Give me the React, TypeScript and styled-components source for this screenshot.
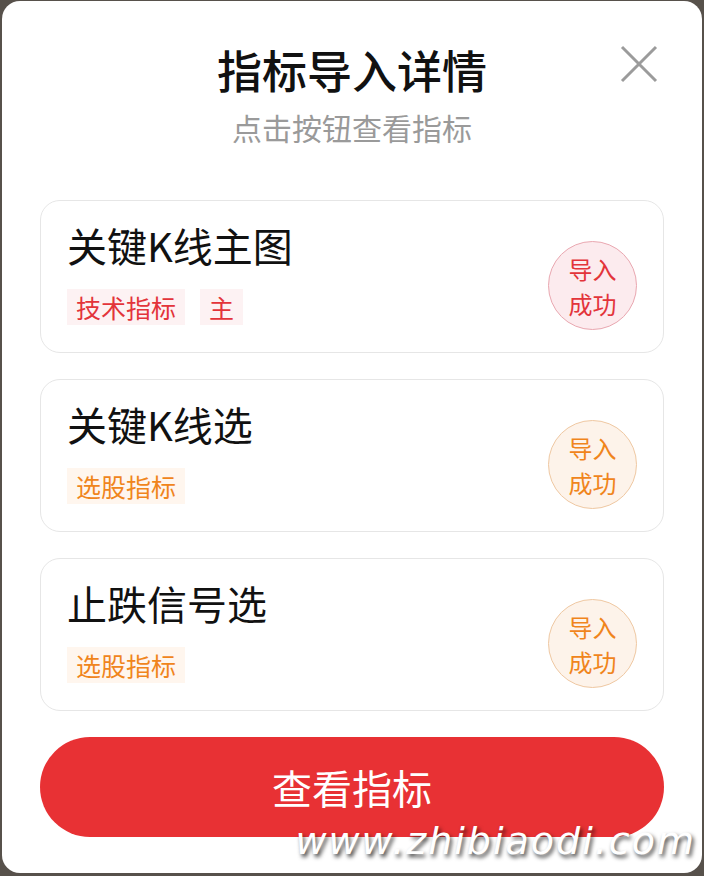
import React from "react";
import styled, { createGlobalStyle } from "styled-components";

const GlobalStyle = createGlobalStyle`
  html, body {
    margin: 0;
    padding: 0;
    background: #57514b;
  }
  body {
    font-family: "Noto Sans CJK SC", "Noto Sans", sans-serif;
  }
`;

type Tone = "red" | "orange";

const palette = {
  red: { text: "#e3343a", tagBg: "#fdf2f3", badgeBg: "#fcebee", badgeBorder: "#e9a7b0" },
  orange: { text: "#f0851c", tagBg: "#fff6ee", badgeBg: "#fdf3ea", badgeBorder: "#efc8a2" },
};

const Modal = styled.div`
  margin: 1px 2px 0 2px;
  height: 872px;
  box-sizing: border-box;
  background: #fff;
  border-radius: 18px;
  padding: 38px 38px 0 38px;
  display: flex;
  flex-direction: column;
  position: relative;
  overflow: hidden;
`;

const Header = styled.div`
  display: flex;
  flex-direction: column;
  align-items: center;
  margin-bottom: 53px;
`;

const Title = styled.h1`
  margin: 0;
  font-size: 45px;
  line-height: 62px;
  font-weight: 500;
  color: #111;
`;

const Subtitle = styled.div`
  font-size: 30px;
  line-height: 40px;
  color: #9a9a9a;
  margin-top: 6px;
`;

const CloseButton = styled.button`
  position: absolute;
  top: 44px;
  right: 44px;
  width: 38px;
  height: 38px;
  padding: 0;
  border: 0;
  background: none;
  cursor: pointer;
`;

const List = styled.div`
  display: flex;
  flex-direction: column;
  gap: 26px;
`;

const Card = styled.div`
  height: 153px;
  box-sizing: border-box;
  border: 1px solid #e6e6e6;
  border-radius: 20px;
  padding: 19px 26px 0 26px;
  display: flex;
  align-items: flex-start;
  justify-content: space-between;
`;

const Info = styled.div`
  display: flex;
  flex-direction: column;
  gap: 19px;
`;

const Name = styled.div`
  font-size: 40px;
  line-height: 50px;
  color: #111;
`;

const Tags = styled.div`
  display: flex;
  gap: 15px;
`;

const Tag = styled.span<{ $tone: Tone }>`
  font-size: 25px;
  line-height: 36px;
  padding: 0 9px;
  color: ${(p) => palette[p.$tone].text};
  background: ${(p) => palette[p.$tone].tagBg};
`;

const Badge = styled.div<{ $tone: Tone }>`
  width: 89px;
  height: 89px;
  border-radius: 50%;
  box-sizing: border-box;
  border: 1px solid ${(p) => palette[p.$tone].badgeBorder};
  background: ${(p) => palette[p.$tone].badgeBg};
  color: ${(p) => palette[p.$tone].text};
  font-size: 24px;
  line-height: 35px;
  display: flex;
  align-items: center;
  justify-content: center;
  text-align: center;
  margin-top: 21px;
`;

const PrimaryButton = styled.button`
  margin-top: 26px;
  height: 100px;
  border: 0;
  border-radius: 50px;
  background: #e83134;
  color: #fff;
  font-family: "Noto Sans CJK SC", sans-serif;
  font-size: 40px;
  cursor: pointer;
`;

const Watermark = styled.div`
  position: absolute;
  right: 6px;
  bottom: 10px;
  font-family: "DejaVu Sans", sans-serif;
  font-style: italic;
  font-size: 38px;
  letter-spacing: 2px;
  color: #fff;
  text-shadow: 2px 3px 4px rgba(0, 0, 0, 0.75);
`;

const items: { name: string; tags: string[]; tone: Tone }[] = [
  { name: "关键K线主图", tags: ["技术指标", "主"], tone: "red" },
  { name: "关键K线选", tags: ["选股指标"], tone: "orange" },
  { name: "止跌信号选", tags: ["选股指标"], tone: "orange" },
];

export default function App() {
  return (
    <>
      <GlobalStyle />
      <Modal>
        <Header>
          <Title>指标导入详情</Title>
          <Subtitle>点击按钮查看指标</Subtitle>
        </Header>
        <CloseButton aria-label="关闭">
          <svg width="38" height="38" viewBox="0 0 38 38">
            <path d="M2 2 L36 36 M36 2 L2 36" stroke="#9b9b9b" strokeWidth="3" />
          </svg>
        </CloseButton>
        <List>
          {items.map((item) => (
            <Card key={item.name}>
              <Info>
                <Name>{item.name}</Name>
                <Tags>
                  {item.tags.map((t) => (
                    <Tag key={t} $tone={item.tone}>
                      {t}
                    </Tag>
                  ))}
                </Tags>
              </Info>
              <Badge $tone={item.tone}>
                导入
                <br />
                成功
              </Badge>
            </Card>
          ))}
        </List>
        <PrimaryButton>查看指标</PrimaryButton>
        <Watermark>www.zhibiaodi.com</Watermark>
      </Modal>
    </>
  );
}
